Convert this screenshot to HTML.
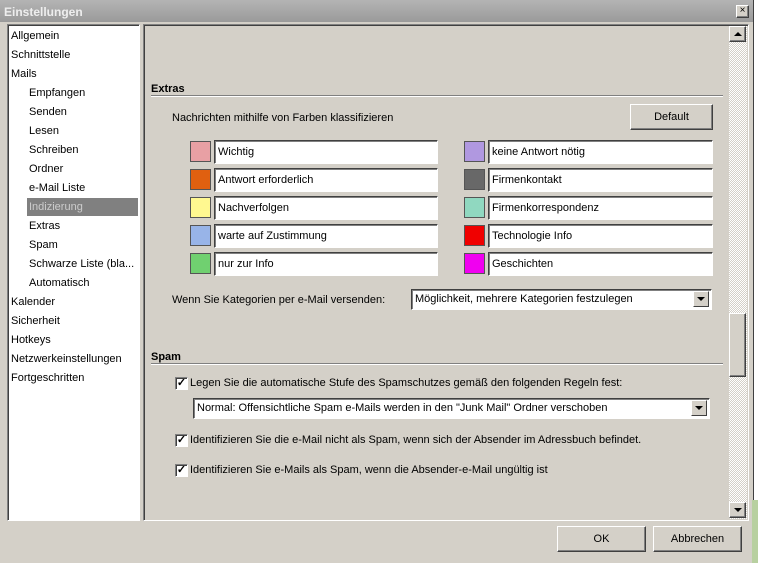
<!DOCTYPE html>
<html><head><meta charset="utf-8"><style>
*{box-sizing:border-box;margin:0;padding:0}
body{width:758px;height:563px;background:#d4d0c8;font-family:"Liberation Sans",sans-serif;font-size:11px;color:#000;position:relative;overflow:hidden}
.a{position:absolute;white-space:nowrap}
.sunk{border:1px solid;border-color:#808080 #fff #fff #808080;box-shadow:inset 1px 1px 0 #404040}
.btn{position:absolute;background:#d4d0c8;border:1px solid;border-color:#fff #404040 #404040 #fff;box-shadow:inset -1px -1px 0 #808080;text-align:center}
.box{position:absolute;background:#fff;border:1px solid;border-color:#404040 #fff #fff #404040;box-shadow:inset 1px 1px 0 #808080;padding-left:3px;line-height:22px}
.sw{position:absolute;width:21px;height:21px;border:1px solid #555}
.cb{position:absolute;width:13px;height:13px;background:#fff;border:1px solid;border-color:#808080 #fff #fff #808080;box-shadow:inset 1px 1px 0 #404040;font-size:11px;line-height:11px;text-align:center;font-weight:bold}
.dd{position:absolute;width:16px;height:16px;right:2px;top:1px;background:#d4d0c8;border:1px solid;border-color:#fff #404040 #404040 #fff}
.dd:after{content:"";position:absolute;left:3px;top:5px;border-left:4px solid transparent;border-right:4px solid transparent;border-top:4px solid #000}
.nav{position:absolute;left:11px}
</style></head><body>
<div class="a" style="left:0;top:0;width:753px;height:22px;background:linear-gradient(#b4b4b4,#9a9a9a);"></div>
<div class="a" style="left:4px;top:5px;color:#eee;font-weight:bold;font-size:12px">Einstellungen</div>
<div class="btn" style="left:736px;top:5px;width:13px;height:13px;font-size:10px;line-height:10px">×</div>
<div class="a" style="left:753px;top:0;width:5px;height:563px;background:#fff;border-left:1px solid #404040"></div>
<div class="a" style="left:752px;top:500px;width:6px;height:63px;background:#b8d0a0"></div>

<div class="a sunk" style="left:7px;top:24px;width:133px;height:497px;background:#fff"></div>
<div class="nav" style="top:30px">Allgemein</div>
<div class="nav" style="top:49px">Schnittstelle</div>
<div class="nav" style="top:68px">Mails</div>
<div class="nav" style="left:29px;top:87px">Empfangen</div>
<div class="nav" style="left:29px;top:106px">Senden</div>
<div class="nav" style="left:29px;top:125px">Lesen</div>
<div class="nav" style="left:29px;top:144px">Schreiben</div>
<div class="nav" style="left:29px;top:163px">Ordner</div>
<div class="nav" style="left:29px;top:182px">e-Mail Liste</div>
<div class="a" style="left:27px;top:198px;width:111px;height:18px;background:#808080"></div>
<div class="nav" style="left:29px;top:201px;color:#ccc">Indizierung</div>
<div class="nav" style="left:29px;top:220px">Extras</div>
<div class="nav" style="left:29px;top:239px">Spam</div>
<div class="nav" style="left:29px;top:258px">Schwarze Liste (bla...</div>
<div class="nav" style="left:29px;top:277px">Automatisch</div>
<div class="nav" style="top:296px">Kalender</div>
<div class="nav" style="top:315px">Sicherheit</div>
<div class="nav" style="top:334px">Hotkeys</div>
<div class="nav" style="top:353px">Netzwerkeinstellungen</div>
<div class="nav" style="top:372px">Fortgeschritten</div>

<div class="a sunk" style="left:143px;top:24px;width:606px;height:497px"></div>
<div class="a" style="left:729px;top:26px;width:18px;height:493px;background:repeating-conic-gradient(#fff 0 25%,#d4d0c8 0 50%) 0 0/2px 2px"></div>
<div class="btn" style="left:729px;top:26px;width:17px;height:16px"><div style="position:absolute;left:4px;top:5px;border-left:4px solid transparent;border-right:4px solid transparent;border-bottom:4px solid #000"></div></div>
<div class="btn" style="left:729px;top:313px;width:17px;height:64px"></div>
<div class="btn" style="left:729px;top:502px;width:17px;height:16px"><div style="position:absolute;left:4px;top:5px;border-left:4px solid transparent;border-right:4px solid transparent;border-top:4px solid #000"></div></div>

<div class="a" style="left:151px;top:83px;font-weight:bold">Extras</div>
<div class="a" style="left:151px;top:95px;width:572px;height:2px;border-top:1px solid #808080;border-bottom:1px solid #fff"></div>
<div class="a" style="left:172px;top:112px">Nachrichten mithilfe von Farben klassifizieren</div>
<div class="btn" style="left:630px;top:104px;width:83px;height:26px;line-height:25px">Default</div>

<div class="sw" style="left:190px;top:141px;background:#e8a0a4"></div><div class="box" style="left:214px;top:140px;width:224px;height:24px">Wichtig</div>
<div class="sw" style="left:190px;top:169px;background:#e06010"></div><div class="box" style="left:214px;top:168px;width:224px;height:24px">Antwort erforderlich</div>
<div class="sw" style="left:190px;top:197px;background:#fff890"></div><div class="box" style="left:214px;top:196px;width:224px;height:24px">Nachverfolgen</div>
<div class="sw" style="left:190px;top:225px;background:#98b4e8"></div><div class="box" style="left:214px;top:224px;width:224px;height:24px">warte auf Zustimmung</div>
<div class="sw" style="left:190px;top:253px;background:#70d070"></div><div class="box" style="left:214px;top:252px;width:224px;height:24px">nur zur Info</div>

<div class="sw" style="left:464px;top:141px;background:#b098e0"></div><div class="box" style="left:488px;top:140px;width:225px;height:24px">keine Antwort nötig</div>
<div class="sw" style="left:464px;top:169px;background:#686868"></div><div class="box" style="left:488px;top:168px;width:225px;height:24px">Firmenkontakt</div>
<div class="sw" style="left:464px;top:197px;background:#90d8c0"></div><div class="box" style="left:488px;top:196px;width:225px;height:24px">Firmenkorrespondenz</div>
<div class="sw" style="left:464px;top:225px;background:#f00000"></div><div class="box" style="left:488px;top:224px;width:225px;height:24px">Technologie Info</div>
<div class="sw" style="left:464px;top:253px;background:#f000f0"></div><div class="box" style="left:488px;top:252px;width:225px;height:24px">Geschichten</div>

<div class="a" style="left:172px;top:294px">Wenn Sie Kategorien per e-Mail versenden:</div>
<div class="box" style="left:411px;top:289px;width:301px;height:21px;line-height:19px">Möglichkeit, mehrere Kategorien festzulegen<div class="dd"></div></div>

<div class="a" style="left:151px;top:351px;font-weight:bold">Spam</div>
<div class="a" style="left:151px;top:363px;width:572px;height:2px;border-top:1px solid #808080;border-bottom:1px solid #fff"></div>
<div class="cb" style="left:175px;top:377px">✓</div>
<div class="a" style="left:190px;top:377px">Legen Sie die automatische Stufe des Spamschutzes gemäß den folgenden Regeln fest:</div>
<div class="box" style="left:193px;top:398px;width:517px;height:21px;line-height:19px">Normal: Offensichtliche Spam e-Mails werden in den "Junk Mail" Ordner verschoben<div class="dd"></div></div>
<div class="cb" style="left:175px;top:434px">✓</div>
<div class="a" style="left:190px;top:434px">Identifizieren Sie die e-Mail nicht als Spam, wenn sich der Absender im Adressbuch befindet.</div>
<div class="cb" style="left:175px;top:464px">✓</div>
<div class="a" style="left:190px;top:464px">Identifizieren Sie e-Mails als Spam, wenn die Absender-e-Mail ungültig ist</div>

<div class="btn" style="left:557px;top:526px;width:89px;height:26px;line-height:25px">OK</div>
<div class="btn" style="left:653px;top:526px;width:89px;height:26px;line-height:25px">Abbrechen</div>
</body></html>
